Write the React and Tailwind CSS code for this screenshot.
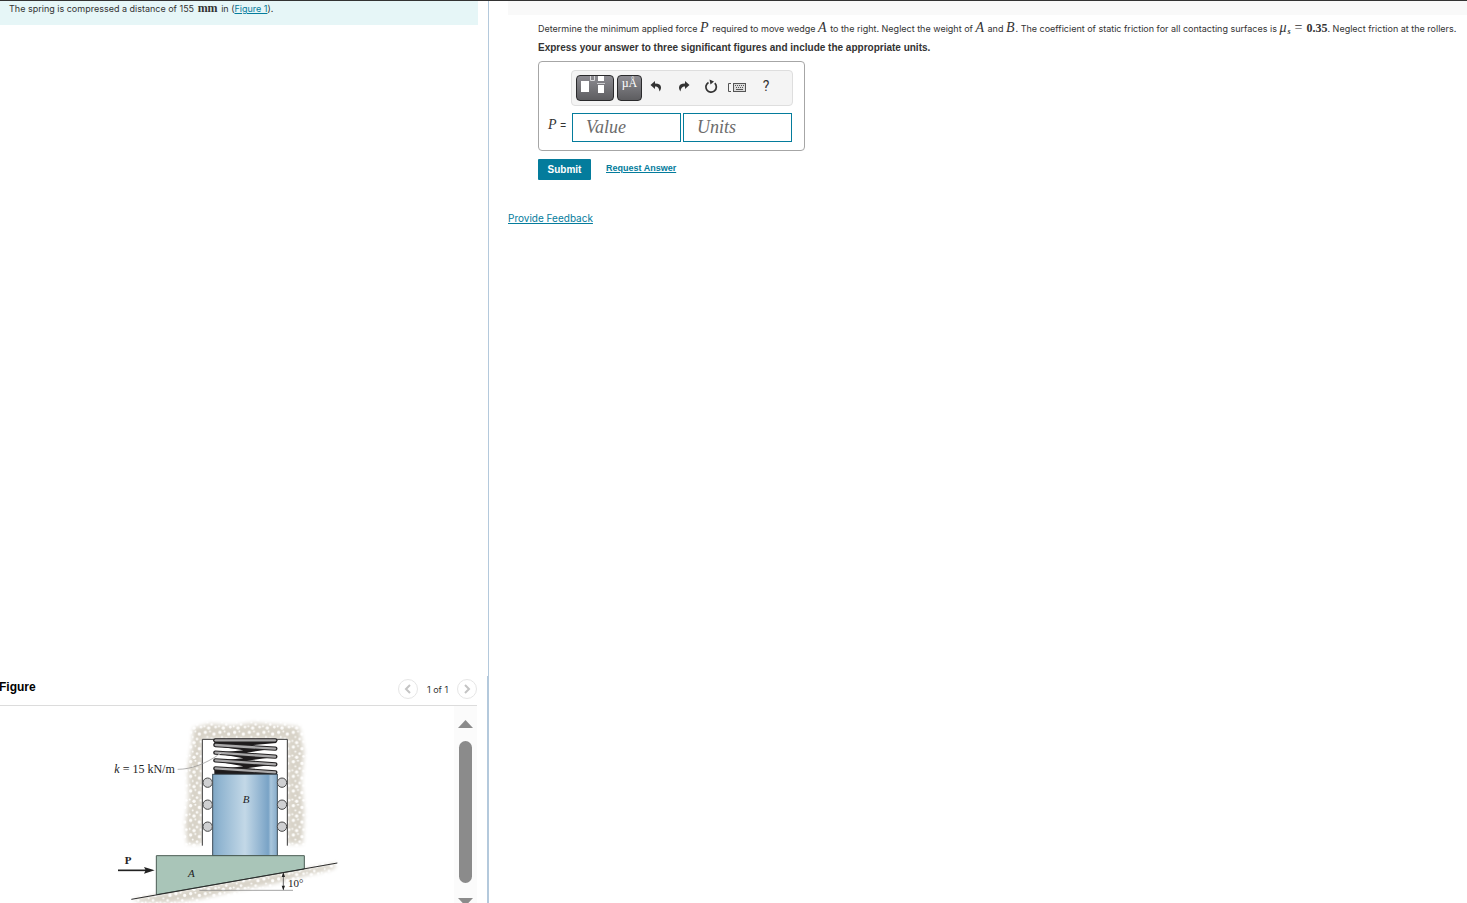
import React, { useState } from "react";

const speckles = [
  [8, 8, 5], [22, 5, 3], [34, 13, 5], [14, 22, 3], [27, 28, 4], [5, 34, 3], [39, 36, 4], [18, 39, 5],
];

const coils = [
  [343, 76, 529, 76],
  [343, 90, 529, 101],
  [343, 113, 529, 125],
  [343, 136, 529, 148],
  [343, 160, 529, 172],
];

const MathText = ({ children }) => (
  <span className="pr-px font-['Liberation_Serif',serif] text-sm leading-3 italic">{children}</span>
);

const WedgeFigure = () => (
  <svg
    viewBox="0 0 750 564"
    className="h-[188px] w-[250px] shrink-0 font-['Liberation_Serif',serif]"
    role="img"
    aria-label="Wedge A under block B held by a spring"
  >
    <defs>
      <pattern id="stone" width="44" height="44" patternUnits="userSpaceOnUse">
        <rect width="44" height="44" fill="#d8d3c8" />
        {speckles.map(([x, y, r]) => (
          <circle key={`${x}-${y}`} cx={x} cy={y} r={r} fill="#fdfcfa" />
        ))}
      </pattern>
      <linearGradient id="block">
        <stop offset="0" stopColor="#7fa6c4" />
        <stop offset="0.1" stopColor="#8fb4d0" />
        <stop offset="0.5" stopColor="#c3d8e7" />
        <stop offset="0.86" stopColor="#79a3c6" />
        <stop offset="0.9" stopColor="#a9c6dc" />
        <stop offset="1" stopColor="#86abc9" />
      </linearGradient>
      <filter id="soft" x="-10%" y="-10%" width="120%" height="120%">
        <feGaussianBlur stdDeviation="6" />
      </filter>
      <mask id="stoneEdge">
        <path
          d="M280 40 L330 26 L400 32 L460 24 L540 30 L598 36 L612 110 L604 200 L612 290 L608 386 L562 386 L562 73 L307 73 L307 386 L262 386 L256 330 L266 250 L264 160 L276 90 Z"
          fill="white"
          filter="url(#soft)"
        />
        <path d="M98 553 L711 445 L700 462 L610 484 L520 506 L400 528 L300 552 L200 564 L120 562 Z" fill="white" filter="url(#soft)" />
      </mask>
    </defs>

    {/* Wall and ground */}
    <rect width="750" height="564" fill="url(#stone)" mask="url(#stoneEdge)" />
    <path d="M307 400 V73 H562 V400 Z" fill="white" />
    <path d="M307 392 V73 H562 V392" fill="none" stroke="#383838" strokeWidth="3" />

    {/* Spring */}
    <path d="M343 80 L529 76 L529 84 L440 92 L529 100 L440 113 L529 125 L440 137 L529 148 L440 160 L529 172 V178 H343 V164 L430 154 L343 138 L430 130 L343 114 L430 106 L343 92 Z" fill="#1e1b1c" />
    {coils.map(([x1, y1, x2, y2]) => (
      <g key={y1} strokeLinecap="round">
        <line x1={x1 + 3} y1={y1} x2={x2 - 3} y2={y2} stroke="#242223" strokeWidth="13" />
        <line x1={x1 + 4} y1={y1} x2={x2 - 4} y2={y2} stroke="#aaa9aa" strokeWidth="7" />
      </g>
    ))}
    <path d="M233 163 C275 163 318 145 356 119" fill="none" stroke="#8c8c8c" strokeWidth="2" />
    <path d="M352 122 L362 115" stroke="white" strokeWidth="2" />

    {/* Block B and its rollers */}
    <rect x="338" y="178" width="194" height="244" fill="url(#block)" stroke="#3d4d59" strokeWidth="3" />
    {[203, 269, 335].map((y) => (
      <g key={y} fill="#cfd0d2" stroke="#4a4a4a" strokeWidth="3">
        <circle cx="323" cy={y} r="14" />
        <circle cx="546" cy={y} r="14" />
      </g>
    ))}

    {/* Wedge A */}
    <path d="M169 422 H613 V462 L169 539 Z" fill="#a9c5b8" stroke="#4b5d55" strokeWidth="3" />
    <path d="M94 553 L712 444" stroke="#2b2b2b" strokeWidth="3" />
    <path d="M298 526 H579" stroke="#777" strokeWidth="2" />
    <path d="M550 475 V524" stroke="#222" strokeWidth="2" />
    <path d="M550 472 L555 486 H545 Z M550 526 L555 512 H545 Z" fill="#222" />

    {/* Applied force */}
    <path d="M54 466 H140" stroke="#222" strokeWidth="5" />
    <path d="M164 466 L132 456 L137 466 L132 476 Z" fill="#222" />

    <g fill="#222" fontSize="33">
      <text x="43" y="173" fontSize="36"><tspan fontStyle="italic">k</tspan> = 15 kN/m</text>
      <text x="428" y="265" fontStyle="italic">B</text>
      <text x="264" y="486" fontStyle="italic">A</text>
      <text x="74" y="447" fontWeight="bold">P</text>
      <text x="564" y="515">10°</text>
    </g>
  </svg>
);

const Chevron = ({ d }) => (
  <svg viewBox="0 0 12 12" className="h-3 w-3" fill="none" stroke="#c4c4c4" strokeWidth="2">
    <path d={d} />
  </svg>
);

const FigurePanel = () => (
  <section className="-mr-px flex h-[227px] shrink-0 flex-col border-r-2 border-[#b4c9dc] pr-[10px]">
    <header className="flex h-[30px] shrink-0 items-center justify-between border-b border-[#dcdcdc]">
      <h2 className="-ml-px pb-2 text-xs font-bold text-black">Figure</h2>
      <div className="flex items-center gap-2 pb-1">
        <button type="button" aria-label="Previous figure" className="flex size-5 items-center justify-center rounded-full border border-[#e6e6e6]">
          <Chevron d="M8 2 L4 6 L8 10" />
        </button>
        <span className="min-w-[23px] pt-[2px] text-center font-['Inter',sans-serif] text-[9px]">1 of 1</span>
        <button type="button" aria-label="Next figure" className="flex size-5 items-center justify-center rounded-full border border-[#e6e6e6]">
          <Chevron d="M4 2 L8 6 L4 10" />
        </button>
      </div>
    </header>
    <div className="flex min-h-0 flex-1 justify-between overflow-hidden">
      <div className="pt-[9px] pl-[100px]">
        <WedgeFigure />
      </div>
      {/* Scroll track */}
      <div className="flex w-[23px] shrink-0 flex-col items-center bg-[#fbfbfb] pt-[14px]">
        <svg viewBox="0 0 15 8" className="h-2 w-[15px] shrink-0" fill="#8b8b8b"><path d="M0 8 L7.5 0 L15 8 Z" /></svg>
        <div className="mt-[13px] h-[142px] w-[13px] shrink-0 rounded-full bg-[#8b8b8b]" />
        <svg viewBox="0 0 15 8" className="mt-[15px] h-2 w-[15px] shrink-0" fill="#8b8b8b"><path d="M0 0 L15 0 L7.5 8 Z" /></svg>
      </div>
    </div>
  </section>
);

const toolButton =
  "flex h-[26px] items-start justify-center overflow-hidden rounded-[4px] border border-[#2a2a2c] bg-linear-to-b from-[#8d8c92] to-[#5d5d60]";
const iconButton = "flex h-6 items-center justify-center text-[#333]";

const Toolbar = () => (
  <div className="flex h-9 items-center rounded-[4px] border border-[#dedede] bg-[#f4f4f4] pl-1">
    <button type="button" aria-label="Templates" className={`${toolButton} w-[38px]`}>
      <svg viewBox="0 0 36 24" className="h-6 w-9 shrink-0" fill="white">
        <rect x="4" y="5" width="8" height="11" />
        <path d="M13.5 0 V4.5 H17.5 V0" fill="none" stroke="#d9d9db" />
        <rect x="21" y="0" width="6" height="5" />
        <rect x="20" y="7" width="8" height="1" fill="#c9c9cc" />
        <rect x="21" y="9" width="6" height="8" />
      </svg>
    </button>
    <button type="button" aria-label="Symbols" className={`${toolButton} ml-[3px] w-[25px] font-['Liberation_Serif',serif] text-xs leading-[14px] text-white`}>
      µÅ
    </button>
    <button type="button" aria-label="Undo" className={`${iconButton} ml-2 w-3 pb-1`}>
      <svg viewBox="0 0 12 12" className="size-3" fill="currentColor">
        <path d="M5 1 L0.5 5 L5 9 V6.5 C8 6.5 9 8 9.5 11.5 C12.5 7 11 3.5 5 3.5 Z" />
      </svg>
    </button>
    <button type="button" aria-label="Redo" className={`${iconButton} ml-4 w-3 pb-1`}>
      <svg viewBox="0 0 12 12" className="size-3" fill="currentColor">
        <path d="M7 1 L11.5 5 L7 9 V6.5 C4 6.5 3 8 2.5 11.5 C-0.5 7 1 3.5 7 3.5 Z" />
      </svg>
    </button>
    <button type="button" aria-label="Reset" className={`${iconButton} ml-[14px] w-[14px] pb-1`}>
      <svg viewBox="0 0 14 14" className="size-[14px]" fill="none" stroke="currentColor" strokeWidth="1.7">
        <path d="M10.8 4.2 A5.2 5.2 0 1 1 4.5 3.4" />
        <path d="M5.5 0.5 L10 2.5 L6.5 5.5 Z" fill="currentColor" stroke="none" />
      </svg>
    </button>
    <button type="button" aria-label="Keyboard shortcuts" className={`${iconButton} ml-[10px] w-[18px]`}>
      <svg viewBox="0 0 18 10" className="h-[10px] w-[18px]" fill="none" stroke="#555">
        <path d="M3 0.5 H0.5 V8.5 H3" />
        <rect x="5.5" y="0.5" width="12" height="8" fill="#dcdcdc" />
        <path d="M7 2.5 H16 M8 4.5 H16" strokeDasharray="1 1" />
        <path d="M8 6.5 H15" />
      </svg>
    </button>
    <button type="button" aria-label="Help" className={`${iconButton} ml-4 w-2 pb-1 font-['Roboto',sans-serif] text-sm`}>?</button>
  </div>
);

const inputClass =
  "h-[29px] w-[109px] border border-[#047c9c] bg-white px-[13px] font-['Liberation_Serif',serif] text-lg italic outline-none placeholder:text-[#6b6b6b]";

const AnswerForm = () => {
  const [value, setValue] = useState("");
  const [units, setUnits] = useState("");

  return (
    <form onSubmit={(e) => e.preventDefault()}>
      <div className="w-[267px] rounded-[4px] border border-[#a6a6a6] pt-2 pr-[11px] pb-2 pl-2">
        <div className="pl-6">
          <Toolbar />
        </div>
        <div className="mt-[7px] flex items-center">
          <label htmlFor="value" className="w-[25px] shrink-0 pb-1 pl-px font-['Liberation_Sans',sans-serif] text-[10px] whitespace-nowrap">
            <MathText>P</MathText> =
          </label>
          <input id="value" type="text" placeholder="Value" value={value} onChange={(e) => setValue(e.target.value)} className={inputClass} />
          <input type="text" aria-label="Units" placeholder="Units" value={units} onChange={(e) => setUnits(e.target.value)} className={`${inputClass} ml-[2px]`} />
        </div>
      </div>
      <div className="mt-2 flex items-center gap-[15px] font-['Liberation_Sans',sans-serif]">
        <button type="submit" className="h-[21px] w-[53px] rounded-[1px] bg-[#047c9c] text-[10px] font-bold text-white">
          Submit
        </button>
        <a href="#answer" className="pb-px text-[9px] font-bold text-[#047c9c] underline">
          Request Answer
        </a>
      </div>
    </form>
  );
};

export default function App() {
  return (
    <div className="flex h-screen overflow-hidden border-t border-[#333] bg-white font-['Liberation_Sans',Arial,sans-serif] text-[#333]">
      <aside className="flex w-1/3 shrink-0 flex-col justify-between border-r border-[#b4c9dc]">
        <p className="mr-[10px] h-6 bg-[#e6f6f7] pl-[9px] font-['Inter',sans-serif] text-[9px] leading-4">
          The spring is compressed a distance of 155{" "}
          <span className="px-px font-['Liberation_Serif',serif] text-xs leading-3 font-bold">mm</span> in (
          <a href="#figure" className="text-[#047c9c] underline">Figure 1</a>).
        </p>
        <FigurePanel />
      </aside>

      <main className="min-w-0 flex-1 pl-[19px]">
        <div className="h-[14px] bg-[#f9f9f9]" />
        <div className="pl-[30px]">
          <p className="pt-[6px] font-['Inter',sans-serif] text-[9px] leading-4">
            Determine the minimum applied force <MathText>P</MathText> required to move wedge <MathText>A</MathText> to the right. Neglect the weight of{" "}
            <MathText>A</MathText> and <MathText>B</MathText>. The coefficient of static friction for all contacting surfaces is{" "}
            <MathText>μ</MathText>
            <sub className="font-['Liberation_Serif',serif] text-[8px] leading-none font-bold italic">s</sub>
            <span className="px-1 font-['Liberation_Serif',serif] text-sm leading-3">=</span>
            <b className="font-['Liberation_Serif',serif] text-xs leading-3">0.35</b>. Neglect friction at the rollers.
          </p>
          <p className="mt-[3px] mb-[5px] text-[10px] leading-4 font-bold">
            Express your answer to three significant figures and include the appropriate units.
          </p>
          <AnswerForm />
        </div>
        <a href="#feedback" className="mt-[31px] inline-block font-['Inter',sans-serif] text-[10px] leading-[14px] text-[#047c9c] underline">
          Provide Feedback
        </a>
      </main>
    </div>
  );
}
